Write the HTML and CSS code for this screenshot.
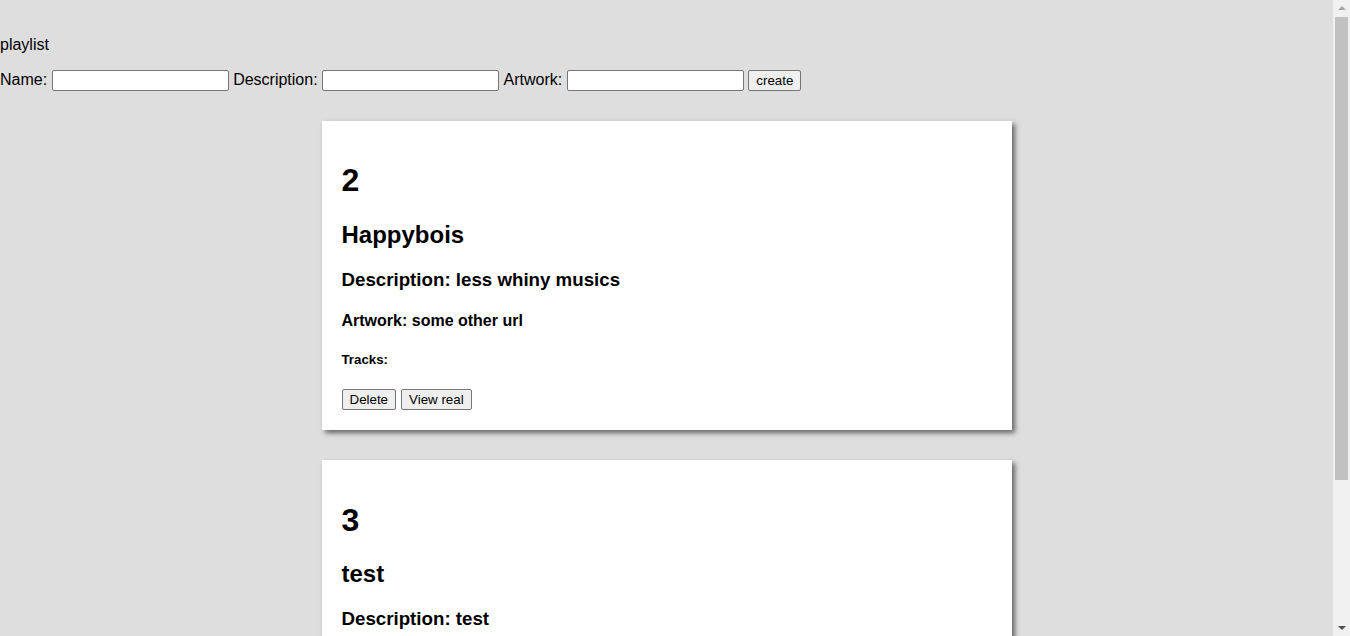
FILE: index.html
```html
<!DOCTYPE html>
<html>
<head>
<meta charset="utf-8">
<title>playlist</title>
<link rel="stylesheet" href="styles.css">
</head>
<body>
<div class="page">
  <div class="header">
    <p class="title">playlist</p>
    <form class="create-form">
      <label>Name: <input type="text" class="field"></label>
      <label>Description: <input type="text" class="field"></label>
      <label>Artwork: <input type="text" class="field"></label>
      <button type="button" class="btn">create</button>
    </form>
  </div>
  <div class="list">
    <div class="card">
      <h1>2</h1>
      <h2>Happybois</h2>
      <h3>Description: less whiny musics</h3>
      <h4>Artwork: some other url</h4>
      <h5>Tracks:</h5>
      <div class="actions">
        <button type="button" class="btn">Delete</button>
        <button type="button" class="btn">View real</button>
      </div>
    </div>
    <div class="card">
      <h1>3</h1>
      <h2>test</h2>
      <h3>Description: test</h3>
      <h4>Artwork: test</h4>
      <h5>Tracks:</h5>
      <div class="actions">
        <button type="button" class="btn">Delete</button>
        <button type="button" class="btn">View real</button>
      </div>
    </div>
  </div>
</div>
<div class="scrollbar">
  <div class="arrow arrow-up"></div>
  <div class="thumb"></div>
  <div class="arrow arrow-down"></div>
</div>
</body>
</html>
```
FILE: styles.css
```css
html, body {
  margin: 0;
  padding: 0;
  background: #dedede;
}
body {
  font-family: "Liberation Sans", Arial, sans-serif;
  font-size: 16px;
  color: #000;
}
.page {
  margin-right: 17px;
}
.header {
  padding-top: 20px;
}
.title {
  margin: 16px 0 15px;
  line-height: 18px;
}
.create-form {
  margin: 0;
  height: 22px;
  display: flex;
  align-items: center;
  gap: 4.5px;
  white-space: nowrap;
}
.create-form label {
  display: flex;
  align-items: center;
  gap: 4.5px;
}
.field {
  box-sizing: border-box;
  width: 177px;
  height: 21px;
  margin: 0;
  padding: 1px 2px;
  border: 1px solid #767676;
  border-radius: 2px;
  background: #fff;
  font-family: "Liberation Sans", Arial, sans-serif;
  font-size: 13.33px;
}
.btn {
  box-sizing: border-box;
  height: 21px;
  margin: 0;
  padding: 1px 7px;
  border: 1px solid #767676;
  border-radius: 2px;
  background: #efefef;
  color: #000;
  font-family: "Liberation Sans", Arial, sans-serif;
  font-size: 13.33px;
  line-height: 17px;
}
.list {
  padding-top: 30px;
}
.card {
  width: 650px;
  padding: 20px;
  margin: 0 auto 30px;
  background: #fff;
  box-shadow: 3px 3px 5px #666;
}
.card h1 {
  font-size: 32px;
  margin: 21.44px 0;
}
.card h2 {
  font-size: 24px;
  margin: 19.92px 0;
}
.card h3 {
  font-size: 18.72px;
  margin: 18.72px 0;
}
.card h4 {
  font-size: 16px;
  margin: 21.28px 0;
}
.card h5 {
  font-size: 13.28px;
  margin: 22.18px 0;
}
.actions {
  display: flex;
  gap: 5px;
}
.scrollbar {
  position: fixed;
  top: 0;
  right: 0;
  width: 17px;
  height: 100vh;
  background: #f1f1f1;
  display: flex;
  flex-direction: column;
  align-items: center;
}
.arrow {
  width: 0;
  height: 0;
  border-left: 4px solid transparent;
  border-right: 4px solid transparent;
}
.arrow-up {
  margin-top: 6px;
  border-bottom: 4px solid #a3a3a3;
}
.arrow-down {
  margin-top: auto;
  margin-bottom: 6px;
  border-top: 4px solid #505050;
}
.thumb {
  margin-top: 7px;
  width: 13px;
  height: 463px;
  background: #c1c1c1;
}
```
